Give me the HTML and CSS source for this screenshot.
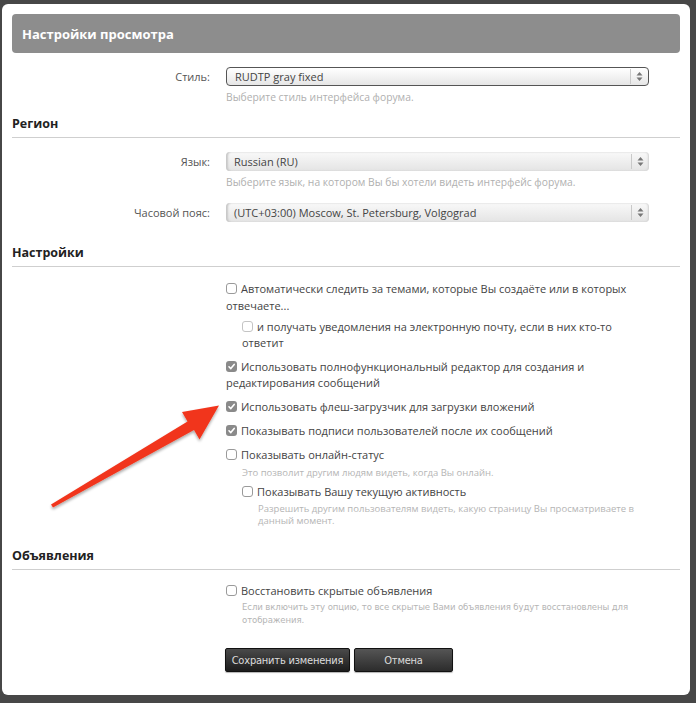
FILE: index.html
```
<!DOCTYPE html>
<html lang="ru">
<head>
<meta charset="utf-8">
<title>Настройки просмотра</title>
<link rel="stylesheet" href="styles.css">
</head>
<body>
<div class="dialog">
  <div class="header">Настройки просмотра</div>

  <div class="row first">
    <div class="label">Стиль:</div>
    <div class="ctrl">
      <div class="select focus"><span class="val">RUDTP gray fixed</span><span class="arr"><svg width="7" height="11" viewBox="0 0 7 11"><path d="M3.5 1 L6.5 4.5 L0.5 4.5 Z M3.5 10 L6.5 6.5 L0.5 6.5 Z" fill="#777"/></svg></span></div>
      <div class="hint">Выберите стиль интерфейса форума.</div>
    </div>
  </div>

  <h2 class="section s-region">Регион</h2>
  <div class="row r-lang">
    <div class="label">Язык:</div>
    <div class="ctrl">
      <div class="select"><span class="val">Russian (RU)</span><span class="arr"><svg width="7" height="11" viewBox="0 0 7 11"><path d="M3.5 1 L6.5 4.5 L0.5 4.5 Z M3.5 10 L6.5 6.5 L0.5 6.5 Z" fill="#777"/></svg></span></div>
      <div class="hint">Выберите язык, на котором Вы бы хотели видеть интерфейс форума.</div>
    </div>
  </div>
  <div class="row r-tz">
    <div class="label">Часовой пояс:</div>
    <div class="ctrl">
      <div class="select"><span class="val">(UTC+03:00) Moscow, St. Petersburg, Volgograd</span><span class="arr"><svg width="7" height="11" viewBox="0 0 7 11"><path d="M3.5 1 L6.5 4.5 L0.5 4.5 Z M3.5 10 L6.5 6.5 L0.5 6.5 Z" fill="#777"/></svg></span></div>
    </div>
  </div>

  <h2 class="section s-settings">Настройки</h2>
  <div class="options">
    <div class="opt o1"><span class="cb"></span>Автоматически следить за темами, которые Вы создаёте или в которых отвечаете...</div>
    <div class="opt nested n1"><span class="cb light"></span>и получать уведомления на электронную почту, если в них кто-то ответит</div>
    <div class="opt o3"><span class="cb on"><svg width="11" height="11" viewBox="0 0 11 11"><path d="M3 5.8 L4.8 7.6 L8.2 3.4" fill="none" stroke="#fff" stroke-width="1.6" stroke-linecap="round" stroke-linejoin="round"/></svg></span>Использовать полнофункциональный редактор для создания и редактирования сообщений</div>
    <div class="opt"><span class="cb on"><svg width="11" height="11" viewBox="0 0 11 11"><path d="M3 5.8 L4.8 7.6 L8.2 3.4" fill="none" stroke="#fff" stroke-width="1.6" stroke-linecap="round" stroke-linejoin="round"/></svg></span>Использовать флеш-загрузчик для загрузки вложений</div>
    <div class="opt"><span class="cb on"><svg width="11" height="11" viewBox="0 0 11 11"><path d="M3 5.8 L4.8 7.6 L8.2 3.4" fill="none" stroke="#fff" stroke-width="1.6" stroke-linecap="round" stroke-linejoin="round"/></svg></span>Показывать подписи пользователей после их сообщений</div>
    <div class="opt"><span class="cb"></span>Показывать онлайн-статус
      <div class="ohint">Это позволит другим людям видеть, когда Вы онлайн.</div>
    </div>
    <div class="opt nested n2"><span class="cb"></span>Показывать Вашу текущую активность
      <div class="ohint two">Разрешить другим пользователям видеть, какую страницу Вы просматриваете в данный момент.</div>
    </div>
  </div>

  <h2 class="section s-ads">Объявления</h2>
  <div class="options ads">
    <div class="opt"><span class="cb"></span>Восстановить скрытые объявления
      <div class="ohint narrow">Если включить эту опцию, то все скрытые Вами объявления будут восстановлены для отображения.</div>
    </div>
  </div>

  <div class="buttons">
    <button class="btn save">Сохранить изменения</button>
    <button class="btn cancel">Отмена</button>
  </div>
</div>

<svg class="arrow" width="696" height="703" viewBox="0 0 696 703">
  <defs>
    <filter id="sh" x="-10%" y="-10%" width="120%" height="130%">
      <feGaussianBlur in="SourceAlpha" stdDeviation="1.5"/>
      <feOffset dx="0" dy="1.5" result="b"/>
      <feComponentTransfer><feFuncA type="linear" slope="0.35"/></feComponentTransfer>
      <feMerge><feMergeNode/><feMergeNode in="SourceGraphic"/></feMerge>
    </filter>
  </defs>
  <polygon filter="url(#sh)" fill="#f1361d" points="51,504.5 187.5,421.5 182,412 219,405.5 199.5,439.5 194,430 53,507.5"/>
</svg>
</body>
</html>
```
FILE: styles.css
```
html, body {
  margin: 0;
  padding: 0;
}
body {
  background: #474747;
  font-family: "Open Sans", "DejaVu Sans", sans-serif;
  color: #3a3a3a;
  width: 696px;
  height: 703px;
  overflow: hidden;
  position: relative;
}
.dialog {
  box-sizing: border-box;
  margin: 4px 6px 0 2px;
  height: 691px;
  background: #fff;
  border-radius: 6px;
  padding: 10px;
}
.header {
  height: 39px;
  background: #8d8d8d;
  border-radius: 4px;
  color: #fff;
  font-weight: 700;
  font-size: 13px;
  display: flex;
  align-items: center;
  padding-left: 10px;
}
.row {
  display: grid;
  grid-template-columns: 198px 423px;
  column-gap: 16px;
}
.row.first { margin-top: 14px; }
.row.r-lang { margin-top: 14px; }
.row.r-tz { margin-top: 14px; }
.label {
  text-align: right;
  font-size: 11px;
  line-height: 19px;
  color: #555;
}
.select {
  box-sizing: border-box;
  height: 19px;
  border-radius: 4px;
  display: flex;
  align-items: center;
  background: linear-gradient(#f9f9f9, #e4e4e4);
  box-shadow: inset 3px 0 2px -1px #c8c8c8, inset -1px 0 2px #d0d0d0;
  font-size: 11px;
  color: #444;
}
.select.focus {
  border: 1px solid #555;
  background: linear-gradient(#ffffff, #e6e6e6);
  box-shadow: none;
}
.select .val {
  flex: 1;
  padding-left: 8px;
}
.select .arr {
  width: 17px;
  height: 15px;
  border-left: 1px solid #c9c9c9;
  display: flex;
  align-items: center;
  justify-content: center;
}
.hint {
  margin-top: 4px;
  font-size: 10.3px;
  line-height: 14px;
  color: #b0b0b0;
}
.section {
  margin: 0;
  font-size: 12.5px;
  font-weight: 700;
  line-height: 18px;
  color: #222;
  padding-bottom: 4px;
  border-bottom: 1px solid #cfcfcf;
}
.s-region { margin-top: 11px; }
.s-settings { margin-top: 22px; }
.s-ads { margin-top: 20px; }
.options {
  margin-left: 214px;
  width: 425px;
  margin-top: 13px;
  font-size: 11px;
  line-height: 16px;
  color: #444;
}
.options.ads { margin-top: 13px; }
.opt { margin-top: 8px; }
.opt:first-child { margin-top: 0; }
.opt.o1 { line-height: 17px; }
.opt.nested { margin-left: 16px; }
.opt.n1 { margin-top: 5px; }
.opt.o3 { margin-top: 8px; }
.opt.n2 { margin-top: 5px; }
.cb {
  display: inline-block;
  box-sizing: border-box;
  width: 11px;
  height: 11px;
  border: 1px solid #9a9a9a;
  border-radius: 3px;
  background: #fff;
  vertical-align: -1px;
  margin-right: 4px;
  position: relative;
}
.cb.light { border-color: #c4c4c4; }
.cb.on {
  border: none;
  background: #8a8a8a;
}
.cb svg {
  display: block;
}
.ohint {
  margin-top: 3px;
  padding-left: 16px;
  font-size: 9.5px;
  line-height: 13px;
  color: #b5b5b5;
}
.ohint.two { line-height: 12px; margin-top: 3px; }
.ohint.narrow {
  font-family: "DejaVu Sans Condensed", "DejaVu Sans", sans-serif;
  font-stretch: condensed;
  font-size: 9.5px;
  letter-spacing: -0.1px;
  margin-top: 1px;
}
.buttons {
  margin-left: 213px;
  margin-top: 22px;
  display: flex;
  gap: 4px;
}
.btn {
  height: 24px;
  border: 1px solid #111;
  border-radius: 2px;
  color: #dcdcdc;
  font-family: "DejaVu Sans Condensed", "DejaVu Sans", sans-serif;
  font-stretch: condensed;
  font-size: 11px;
  letter-spacing: -0.2px;
  padding: 0;
  white-space: nowrap;
  box-shadow: 0 1px 1px rgba(0,0,0,0.3);
}
.btn.save {
  width: 125px;
  background: linear-gradient(#4a4a4a, #1c1c1c);
}
.btn.cancel {
  width: 99px;
  background: linear-gradient(#555, #2c2c2c);
}
.arrow {
  position: absolute;
  left: 0;
  top: 0;
  pointer-events: none;
}
```
